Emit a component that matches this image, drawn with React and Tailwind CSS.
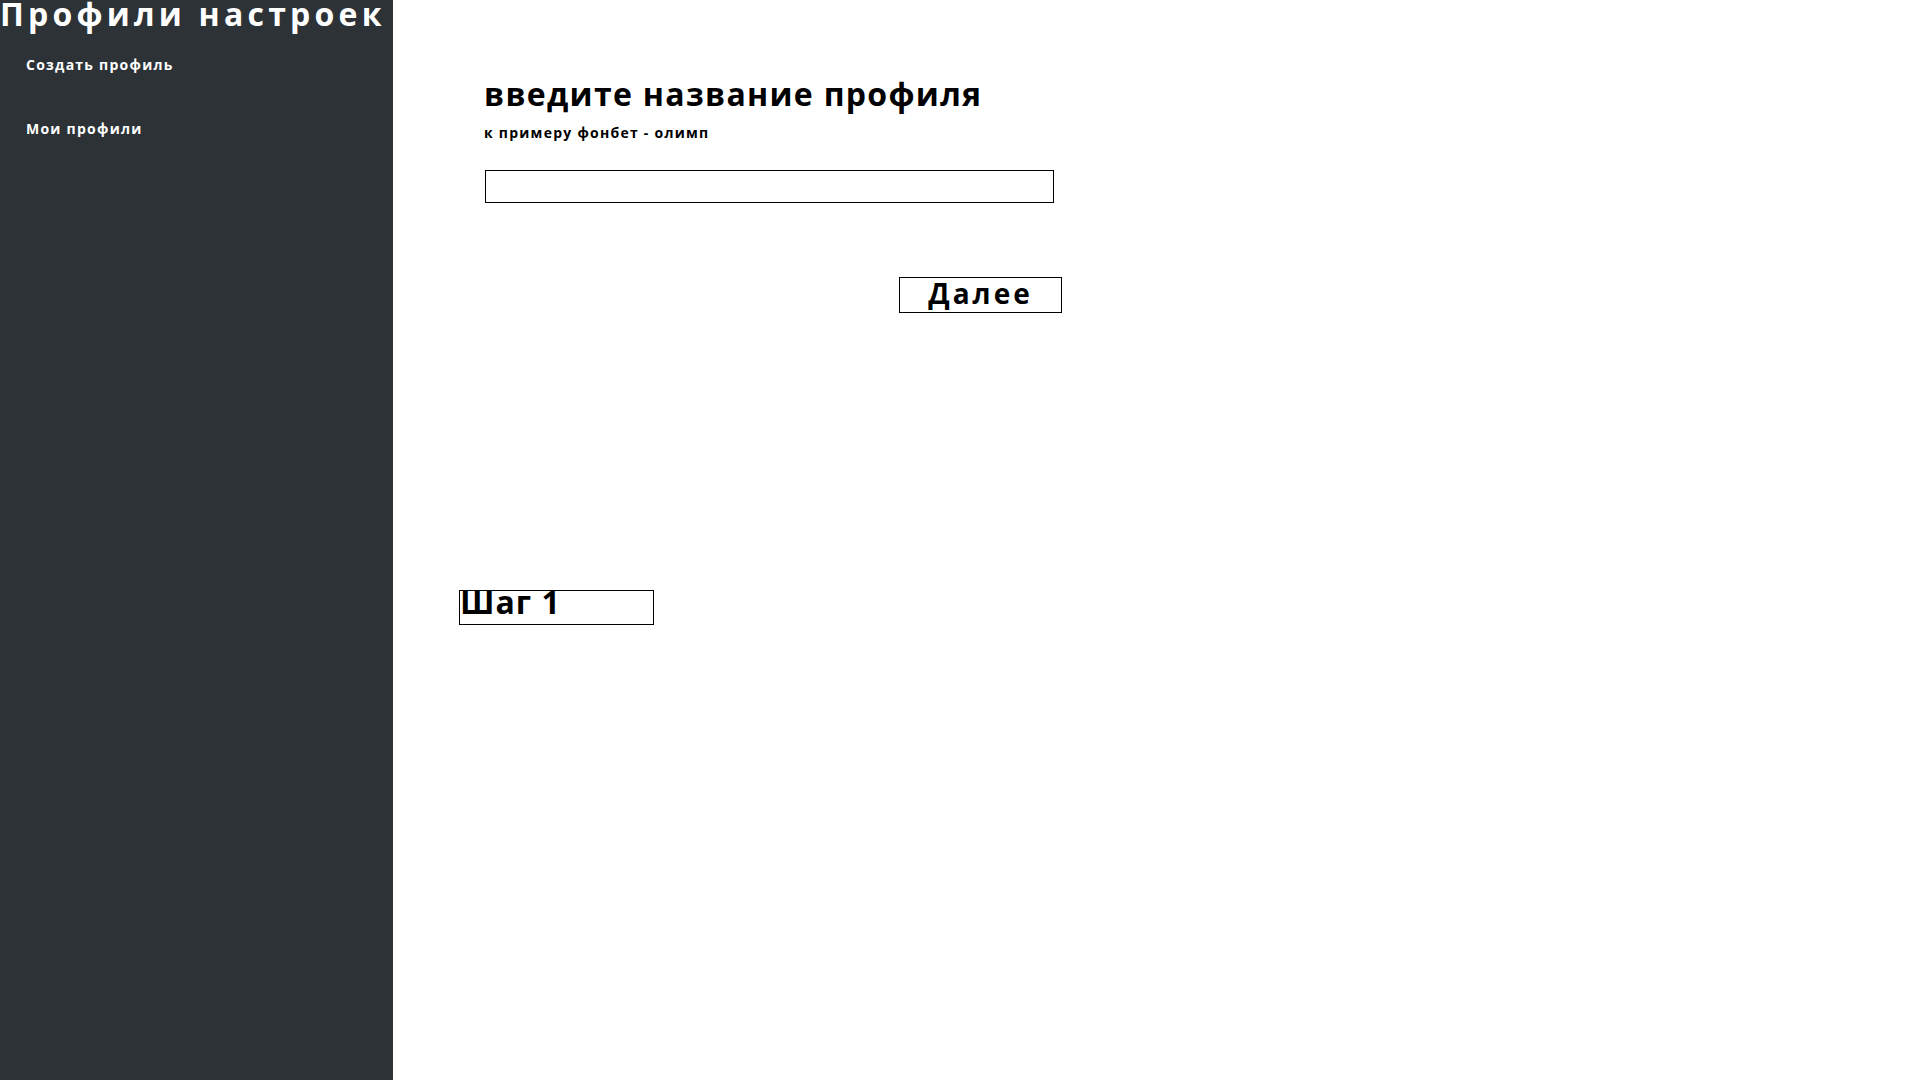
export default function App() {
  return (
    <div className="flex h-screen w-full overflow-hidden bg-white font-['Open_Sans',sans-serif]">
      <aside className="flex h-full w-[393px] shrink-0 flex-col bg-[#2c3236] text-white">
        <h1 className="-mt-[8px] whitespace-nowrap text-[32px] font-bold leading-[44px] tracking-[4.2px]">
          Профили настроек
        </h1>
        <nav className="flex flex-col gap-[44px] pl-[26px] pt-[19px]">
          <a className="text-sm font-bold tracking-[1.25px]">Создать профиль</a>
          <a className="text-sm font-bold tracking-[1.25px]">Мои профили</a>
        </nav>
      </aside>

      <main className="flex-1 pl-[91px] pt-[72px]">
        <h2 className="text-[32px] font-bold leading-[44px] tracking-[1.3px] text-black">
          введите название профиля
        </h2>
        <p className="mt-[7px] text-sm font-bold tracking-[1.25px] text-black">к примеру фонбет - олимп</p>
        <input
          type="text"
          className="ml-[1px] mt-[27px] block h-[33px] w-[569px] border border-black bg-white outline-none"
        />
        <div className="flex w-[578px] justify-end pt-[74px]">
          <button className="h-[36px] w-[163px] border border-black pb-[4px] text-[28px] font-bold leading-[30px] tracking-[3px] text-black">
            Далее
          </button>
        </div>
        <div className="-ml-[25px] mt-[277px] h-[35px] w-[195px] border border-black">
          <h3 className="-mt-[11px] whitespace-nowrap text-[32px] font-bold leading-[44px] tracking-[1px] text-black">Шаг 1</h3>
        </div>
      </main>
    </div>
  );
}
